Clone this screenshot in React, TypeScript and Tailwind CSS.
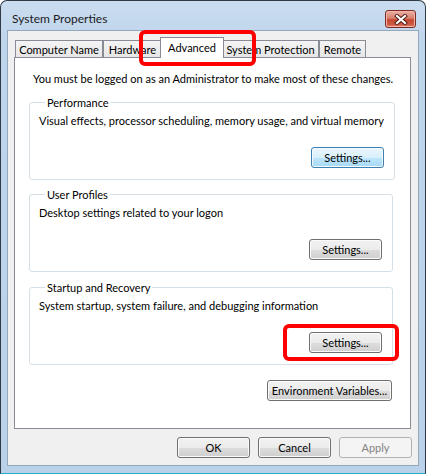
import React from "react";

const btnBase =
  "h-[21px] rounded-[3px] border text-[11px] leading-none whitespace-nowrap flex items-center justify-center";
const btnNormal =
  "border-[#707070] text-black bg-[linear-gradient(to_bottom,#f2f2f2_0%,#ebebeb_50%,#dddddd_51%,#cfcfcf_100%)] shadow-[inset_0_0_0_1px_#fbfbfb]";
const btnFocus =
  "border-[#3c7fb1] text-black bg-[linear-gradient(to_bottom,#eaf6fd_0%,#d9f0fc_50%,#bee6fd_51%,#a7d9f5_100%)] shadow-[inset_0_0_0_1px_#f4fbff]";
const btnDisabled = "border-[#adb2b5] text-[#838383] bg-[#f4f4f4]";

const Tab = ({ label, width, active }: { label: string; width: string; active?: boolean }) => {
  if (active) {
    return (
      <div
        className={`${width} h-[21px] -mb-[1px] -mx-[2px] relative z-10 bg-white border border-b-0 border-[#898c95] flex justify-center pt-[2px] leading-[15px] whitespace-nowrap text-black`}
      >
        {label}
      </div>
    );
  }
  return (
    <div
      className={`${width} h-[17px] bg-[linear-gradient(to_bottom,#f4f4f4,#e6e6e6)] border border-b-0 border-[#898c95] flex justify-center pt-[1px] leading-[15px] whitespace-nowrap text-black`}
    >
      {label}
    </div>
  );
};

const Group = ({
  title,
  text,
  focused,
  className,
}: {
  title: string;
  text: string;
  focused?: boolean;
  className: string;
}) => (
  <fieldset className={`border border-[#d5dfe5] rounded-[3px] pl-[9px] pr-[10px] pb-[11px] ${className}`}>
    <legend className="ml-[6px] px-[2px] leading-[15px] whitespace-nowrap text-black">{title}</legend>
    <div className="pt-[3px] leading-[15px] whitespace-nowrap text-black">{text}</div>
    <div className="flex justify-end mt-[19px]">
      <button className={`${btnBase} ${focused ? btnFocus : btnNormal} w-[73px]`}>Settings...</button>
    </div>
  </fieldset>
);

export default function App() {
  return (
    <div className="relative w-[426px] h-[474px] font-['Lato',sans-serif] text-[11px] bg-white">
      <div className="h-full flex flex-col rounded-t-[7px] border border-[#2f3a46] border-b-[#27a9c9] bg-[linear-gradient(to_bottom,#cadcef_0px,#bfd5ec_40px,#bad1ea_100%)] px-[6px] pb-[7px]">
        {/* title bar */}
        <div className="h-[29px] flex items-end justify-between pl-[5px] pr-[3px] pb-[2px]">
          <span className="text-[12px] leading-[17px] text-[#1b1b1b] pb-[1px]">System Properties</span>
          <div className="w-[31px] h-[18px] rounded-[3px] border border-[#7d2b22] bg-[linear-gradient(to_bottom,#eab0a3_0%,#d8806f_45%,#c4472f_55%,#cf5a44_85%,#e48b74_100%)] shadow-[inset_0_0_0_1px_#f0b5a8] flex items-center justify-center">
            <svg width="14" height="11" viewBox="0 0 14 11">
              <path d="M3 2 L11 9 M11 2 L3 9" stroke="#4a1a14" strokeWidth="4" strokeLinecap="square" />
              <path d="M3 2 L11 9 M11 2 L3 9" stroke="#ffffff" strokeWidth="2.2" strokeLinecap="square" />
            </svg>
          </div>
        </div>

        {/* client area */}
        <div className="flex-1 flex flex-col bg-[#f0f0f0] border border-[#93a7bd] pt-[6px] pl-[6px] pr-[7px]">
          <div className="flex items-end h-[20px] pl-[1px]">
            <Tab label="Computer Name" width="w-[88px]" />
            <Tab label="Hardware" width="w-[59px]" />
            <Tab label="Advanced" width="w-[64px]" active />
            <Tab label="System Protection" width="w-[97px]" />
            <Tab label="Remote" width="w-[47px]" />
          </div>

          <div className="flex-1 bg-white border border-[#898c95] flex flex-col pl-[14px] pr-[17px] pt-[13px]">
            <p className="pl-[4px] leading-[15px] whitespace-nowrap text-black">
              You must be logged on as an Administrator to make most of these changes.
            </p>
            <Group
              className="mt-[9px]"
              title="Performance"
              text="Visual effects, processor scheduling, memory usage, and virtual memory"
              focused
            />
            <Group className="mt-[7px]" title="User Profiles" text="Desktop settings related to your logon" />
            <Group
              className="mt-[8px]"
              title="Startup and Recovery"
              text="System startup, system failure, and debugging information"
            />
            <div className="flex justify-end mt-[15px] pr-[1px]">
              <button className={`${btnBase} ${btnNormal} w-[125px]`}>Environment Variables...</button>
            </div>
          </div>

          <div className="flex justify-end gap-[8px] pt-[8px] pb-[7px] -mr-[1px]">
            <button className={`${btnBase} ${btnNormal} w-[73px]`}>OK</button>
            <button className={`${btnBase} ${btnNormal} w-[73px]`}>Cancel</button>
            <button className={`${btnBase} ${btnDisabled} w-[73px]`}>Apply</button>
          </div>
        </div>
      </div>

      {/* red annotation boxes */}
      <div className="absolute left-[139px] top-[30px] w-[117px] h-[36px] border-[4px] border-[#ff0000] rounded-[6px]" />
      <div className="absolute left-[283px] top-[324px] w-[116px] h-[37px] border-[4px] border-[#ff0000] rounded-[6px]" />
    </div>
  );
}
